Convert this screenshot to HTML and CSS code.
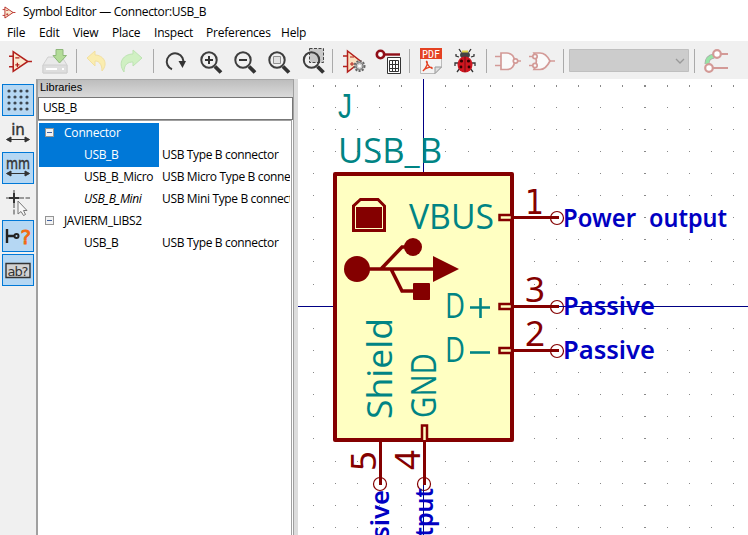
FILE: index.html
```html
<!DOCTYPE html>
<html lang="en">
<head>
<meta charset="utf-8">
<title>Symbol Editor — Connector:USB_B</title>
<link rel="stylesheet" href="styles.css">
</head>
<body>
<svg class="defs" width="0" height="0">
  <defs>
    <symbol id="amp" viewBox="0 0 24 24">
      <path d="M5 2.5V21.5L19 12ZM1 7H5M1 17H5M19 12H23" fill="#fae9d0" stroke="#b3201c" stroke-width="1.5"/>
      <path d="M7 8.5H11M7 15.2H11M9 13.2V17.2" fill="none" stroke="#b3201c" stroke-width="1.2"/>
    </symbol>
    <symbol id="lens" viewBox="0 0 24 24">
      <circle cx="10" cy="10" r="7.7" fill="none" stroke="#3e3e3e" stroke-width="2"/>
      <path d="M16 16.5L22 22.5" stroke="#333" stroke-width="3.8" fill="none"/>
    </symbol>
  </defs>
</svg>
<div class="app">
  <header class="title"><svg class="logo"><use href="#amp"/></svg><span>Symbol Editor — Connector:USB_B</span></header>
  <nav class="menu"><span class="m1">File</span><span class="m2">Edit</span><span class="m3">View</span><span class="m4">Place</span><span class="m5">Inspect</span><span class="m6">Preferences</span><span class="m7">Help</span></nav>
  <div class="toolbar">
    <svg width="748" height="38" viewBox="0 41 748 38">
      <use href="#amp" x="8" y="49" width="25" height="25"/>
      <g>
        <path d="M48 57H62L67 65V73H43V65Z" fill="#e9e9e9" stroke="#d0d0d0"/>
        <path d="M43 65H67V73H43Z" fill="#dedede" stroke="#cfcfcf"/>
        <path d="M46 69H57M62 69H64" stroke="#fff" stroke-width="2"/>
        <path d="M56 49.5H63V55.5H66.5L59.5 63L53 55.5H56Z" fill="#b3dc98" stroke="#8eb77a"/>
      </g>
      <path d="M76.5 49V73M153.5 49V73M332.5 49V73M409.5 49V73M486.5 49V73M563.5 49V73M694.5 49V73" stroke="#aaa"/>
      <path d="M87 58L95 51V55C103 55 109 63 102 71C102 63 98 61 95 61V66Z" fill="#faedb0" stroke="#f2dfa0"/>
      <path d="M142 58L133 50V54C124 54 117 62 124 72C124 64 128 62 133 62V66Z" fill="#d0f0c3" stroke="#bde3b3"/>
      <path d="M172 69.3A8.3 8.3 0 1 1 183 64" fill="none" stroke="#3b3b3b" stroke-width="2"/>
      <path d="M178.5 61L186 61L182.5 68Z" fill="#333"/>
      <use href="#lens" x="199" y="50" width="24" height="24"/><path d="M205 60H213M209 56V64" stroke="#333" stroke-width="2"/>
      <use href="#lens" x="233" y="50" width="24" height="24"/><path d="M239 60H247" stroke="#333" stroke-width="2"/>
      <use href="#lens" x="267" y="50" width="24" height="24"/><path d="M273.5 56.5H280.500V63.500H273.500Z" fill="#e2e2e2" stroke="#909090"/>
      <path d="M309.500 48.500H323.500V62.500H309.500Z" fill="#c8c8c8" stroke="#444" stroke-dasharray="3 1.500"/>
      <use href="#lens" x="301.500" y="50" width="24" height="24"/>
      <path d="M347.500 51V72L361 61.500ZM343 56H347M343 66.500H347" fill="#fae0bf" stroke="#b3201c" stroke-width="1.500"/><path d="M350 57H354M350 64H354M352 62V66" stroke="#b3201c"/>
      <circle cx="359.500" cy="66" r="5" fill="#c8c8c8" stroke="#666" stroke-width="2" stroke-dasharray="2 1.300"/><circle cx="359.500" cy="66" r="3.500" fill="#ccc" stroke="#777"/><circle cx="359.500" cy="66" r="1.500" fill="#fff"/>
      <path d="M385 54.500H400" stroke="#900e18" stroke-width="2.400"/><circle cx="380.500" cy="54.500" r="3.700" fill="#fff" stroke="#900e18" stroke-width="2.600"/>
      <path d="M387.500 57.500H400.500V73.500H387.500Z" fill="#fff" stroke="#333"/><path d="M389.500 60.500H398.500V71.500H389.500ZM389.500 64.500H398.500M389.500 68.500H398.500M392.500 60V72M395.500 60V72" fill="none" stroke="#333"/>
      <path d="M420.500 48.500H441.500V67L435 73.500H420.500Z" fill="#f3f3f3" stroke="#bbb"/>
      <path d="M420 48H442V59H420Z" fill="#e44122"/><text x="422" y="57.500" font-family="DejaVu Sans Mono" font-size="10" fill="#fff" textLength="18">PDF</text>
      <path d="M423 71C427 67 428 63 427 61.500C425.500 60 427 66 432 68.500C433 66.500 426 66.500 423 71Z" fill="none" stroke="#e44122" stroke-width="1.300"/><path d="M435 73.500V67H441.500Z" fill="#ddd" stroke="#999"/>
      <path d="M459 57L456 56V54M471 57L474 56V54M458 63H455V66M472 63H475V66M460 68L457 72M470 68L473 72M461 52L459 49M469 52L471 49" fill="none" stroke="#333" stroke-width="1.300"/>
      <ellipse cx="465" cy="55" rx="5" ry="4" fill="#444"/><path d="M462 51.500H468" stroke="#e1d44b" stroke-width="2"/>
      <ellipse cx="465" cy="64.500" rx="7.500" ry="8" fill="#cf1620"/><path d="M465 56.500V72" stroke="#701015"/><circle cx="461.500" cy="61" r="1.600" fill="#300"/><circle cx="468.500" cy="61" r="1.600" fill="#300"/><circle cx="461" cy="67" r="1.400" fill="#300"/><circle cx="469" cy="67" r="1.400" fill="#300"/>
      <g fill="#fafafa" stroke="#d39a97" stroke-width="1.700"><path d="M495 56.500H501M495 65.500H501M518 61H521"/><path d="M501 53H507C517 53 517 69.500 507 69.500H501Z"/><circle cx="515.500" cy="61" r="2.200"/>
      <path d="M529 56.500H535M529 65.500H535M549 61H555"/><path d="M534 53H540C545 53 548 57 550 61C548 65 545 69.500 540 69.500H534C537 64 537 58 534 53Z"/><circle cx="535" cy="56.500" r="2.200"/><circle cx="535" cy="65.500" r="2.200"/></g>
      <path d="M569.500 49.500H688.500V71.500H569.500Z" fill="#ccc" stroke="#bfbfbf"/><path d="M676 59L680 63L684 59" fill="none" stroke="#999" stroke-width="1.300"/>
      <path d="M707 64C707 59 709 57 714 56" fill="none" stroke="#aaa" stroke-width="5"/><path d="M707 64C707 59 709 57 714 56" fill="none" stroke="#98e5a6" stroke-width="3.500"/>
      <g fill="#fff" stroke="#d39a97" stroke-width="2.200"><path d="M720 54H728M713 68H728"/><circle cx="717" cy="54" r="3.800"/><circle cx="709" cy="68" r="3.800"/></g>
    </svg>
  </div>
  <main class="work">
    <aside class="tools">
      <svg class="tool on" viewBox="0 0 32 32"><path d="M7 7H26M7 13H26M7 19H26M7 25H26" fill="none" stroke="#3c4650" stroke-width="3.200" stroke-linecap="round" stroke-dasharray="0 6"/></svg>
      <svg class="tool" viewBox="0 0 32 32"><text class="unit" x="16" y="17" text-anchor="middle" font-size="15">in</text><path d="M5 21.500H27M9 19L4.500 21.500L9 24ZM23 19L27.500 21.500L23 24Z" fill="#333" stroke="#333" stroke-width="1"/></svg>
      <svg class="tool on" viewBox="0 0 32 32"><text class="unit" x="16" y="17" text-anchor="middle" font-size="15" textLength="24" lengthAdjust="spacingAndGlyphs">mm</text><path d="M5 21.500H27M9 19L4.500 21.500L9 24ZM23 19L27.500 21.500L23 24Z" fill="#333" stroke="#333" stroke-width="1"/></svg>
      <svg class="tool" viewBox="0 0 32 32"><path d="M4 12H28M12 4V30" stroke="#999" stroke-width="2" stroke-dasharray="5 1.500"/><path d="M7 12H17M12 7V17" stroke="#333" stroke-width="2"/><path d="M16 15V28L19 25.500L21.500 29.500L23.500 28.500L21.500 24.500H25Z" fill="#f7f7f7" stroke="#777"/></svg>
      <svg class="tool on" viewBox="0 0 32 32"><path d="M5 9V23M5 16H12" stroke="#222" stroke-width="2.400"/><circle cx="14.500" cy="16" r="2" fill="none" stroke="#222" stroke-width="2"/><text class="ask" x="18.500" y="24" font-size="20">?</text></svg>
      <svg class="tool on" viewBox="0 0 32 32"><path d="M4 9.500H28V23.500H4Z" fill="#d2d2d2" stroke="#333" stroke-width="1.400"/><text x="16" y="21.500" text-anchor="middle" font-size="13" textLength="21">ab?</text></svg>
    </aside>
    <section class="panel">
      <div class="caption">Libraries</div>
      <div class="search">USB_B</div>
      <div class="tree">
        <div class="row sel"><i class="box"></i><span class="lib">Connector</span></div>
        <div class="row sel"><span class="name">USB_B</span><span class="desc">USB Type B connector</span></div>
        <div class="row"><span class="name">USB_B_Micro</span><span class="desc">USB Micro Type B connector</span></div>
        <div class="row"><span class="name it">USB_B_Mini</span><span class="desc">USB Mini Type B connector</span></div>
        <div class="row"><i class="box"></i><span class="lib caps">JAVIERM_LIBS2</span></div>
        <div class="row"><span class="name">USB_B</span><span class="desc">USB Type B connector</span></div>
      </div>
    </section>
    <div class="sash"></div>
    <svg class="canvas" width="450" height="456" viewBox="298 79 450 456">
      <g id="grid" fill="#888" shape-rendering="crispEdges"></g>
      <path d="M423.500 79V535M298 306.500H748" stroke="#000084" shape-rendering="crispEdges"/>
      <rect x="335" y="174" width="177" height="266" fill="#ffffc2" stroke="#840000" stroke-width="4" stroke-linejoin="round"/>
      <g fill="none" stroke="#840000" stroke-width="3">
        <path d="M512 217.500H559M512 306.500H559M512 350.500H559M380.500 440V485M424.500 440V485"/>
        <path d="M499.500 215H512V220H499.500ZM499.500 304H512V309H499.500ZM499.500 348H512V353H499.500ZM422 440V425.500H427V440" stroke-width="2.500" fill="#ffffc2"/>
        <g stroke-width="1.200"><circle cx="557" cy="218" r="6.500"/><circle cx="557" cy="307" r="6.500"/><circle cx="557" cy="351" r="6.500"/><circle cx="380" cy="484" r="6.500"/><circle cx="424" cy="484" r="6.500"/></g>
        <path d="M353.500 230.500V206L360.500 199.500H378L384.500 206V230.500Z"/>
        <path d="M358 269H434M381 269L402 247H413M391 269L402 291H414" stroke-width="3.500"/>
      </g>
      <g fill="#840000"><path d="M356 207H382V228H356ZM433 256V282L459 269Z"/><circle cx="357" cy="269" r="13"/><circle cx="413" cy="247" r="9"/><rect x="413" y="283" width="17" height="17" rx="1"/></g>
      <g class="field">
        <text class="jay" x="338" y="118" textLength="14" lengthAdjust="spacingAndGlyphs">J</text>
        <text x="338" y="163" textLength="104" lengthAdjust="spacingAndGlyphs">USB_B</text>
        <text x="409" y="229" textLength="85" lengthAdjust="spacingAndGlyphs">VBUS</text>
        <text x="445" y="318" textLength="20" lengthAdjust="spacingAndGlyphs">D</text><path d="M470 307.500H490M480.500 298V318" stroke="#008484" stroke-width="2.600"/>
        <text x="445" y="362" textLength="20" lengthAdjust="spacingAndGlyphs">D</text><path d="M470 352.500H490" stroke="#008484" stroke-width="2.600"/>
        <text transform="translate(392 419) rotate(-90)" textLength="101" lengthAdjust="spacingAndGlyphs">Shield</text>
        <text transform="translate(436 418) rotate(-90)" textLength="65" lengthAdjust="spacingAndGlyphs">GND</text>
      </g>
      <g class="num">
        <text class="one" x="525" y="214" textLength="19" lengthAdjust="spacingAndGlyphs">1</text><text x="525" y="302">3</text><text x="525" y="346">2</text>
        <text transform="translate(376 471) rotate(-90)">5</text><text transform="translate(420 470) rotate(-90)">4</text>
      </g>
      <path d="M423.500 490V535M563 306.500H748" stroke="#000084" shape-rendering="crispEdges"/>
      <g class="type">
        <text x="563" y="227" textLength="73" lengthAdjust="spacingAndGlyphs">Power</text>
        <text x="649" y="227" textLength="78" lengthAdjust="spacingAndGlyphs">output</text>
        <text x="563" y="315" textLength="92" lengthAdjust="spacingAndGlyphs">Passive</text>
        <text x="563" y="359" textLength="92" lengthAdjust="spacingAndGlyphs">Passive</text>
        <text transform="translate(389 582) rotate(-90)" textLength="92" lengthAdjust="spacingAndGlyphs">Passive</text>
        <text transform="translate(433 566) rotate(-90)" textLength="78" lengthAdjust="spacingAndGlyphs">output</text>
      </g>
    </svg>
  </main>
</div>
<script src="grid.js"></script>
</body>
</html>
```
FILE: styles.css
```css
* { box-sizing: border-box; }
body { margin: 0; overflow: hidden; background: #fff; color: #000; font: 12px/16px "Open Sans", "Noto Sans", sans-serif; }
svg { display: block; flex: none; }
.defs { position: absolute; }
.app { width: 748px; height: 535px; display: flex; flex-direction: column; overflow: hidden; }
.title { height: 24px; display: flex; align-items: center; gap: 7px; padding-left: 2px; letter-spacing: -.34px; }
.logo { width: 14px; height: 15px; }
.menu { height: 17px; display: grid; grid-template-columns: 32px 34px 39px 42px 52px 75px 40px; padding-left: 7px; line-height: 17px; letter-spacing: -.2px; white-space: nowrap; }
.toolbar { height: 38px; background: #f0f0f0; }
.work { display: flex; height: 456px; }
.tools { width: 36px; background: #f0f0f0; padding: 5px 2px; display: flex; flex-direction: column; gap: 2px; }
.tool { width: 32px; height: 32px; font-family: "DejaVu Sans", sans-serif; fill: #333; }
.tool.on { background: #b5d7f3; outline: 1px solid #0078d7; outline-offset: -1px; }
.unit { stroke: #333; stroke-width: .4; }
.tool .ask { fill: #f26a10; stroke: #f26a10; stroke-width: .9; }
.panel { width: 258px; border-left: 2px solid #a0a0a0; border-right: 1px solid #a0a0a0; border-top: 1px solid #aaa; background: #fff; }
.caption { height: 17px; background: linear-gradient(#bdbdbd, #dadada); font: 11px/15px "Liberation Sans", sans-serif; padding-left: 2px; }
.search { height: 23px; border: 1px solid #777; padding: 2px 4px; letter-spacing: -.45px; }
.tree { height: 415px; padding-top: 2px; border-top: 1px solid #a0a0a0; border-right: 1px solid #a0a0a0; margin-right: 1px; overflow: hidden; }
.row { height: 22px; line-height: 20px; display: grid; grid-template-columns: 25px 20px 78px 128px; margin-left: 1px; white-space: nowrap; letter-spacing: -.35px; }
.sel { background: linear-gradient(#0078d7, #0078d7) 0 0 / 120px 22px no-repeat; }
.sel .lib, .sel .name { color: #fff; }
.box { grid-column: 1; width: 9px; height: 9px; margin: 5px 0 0 6px; border: 1px solid #959595; background: linear-gradient(#4062a0, #4062a0) center / 5px 1px no-repeat, #f3f3f3; }
.lib { grid-column: 2 / 4; letter-spacing: -.2px; }
.caps { letter-spacing: -.35px; }
.name { grid-column: 3; }
.desc { grid-column: 4; overflow: hidden; }
.it { font-style: italic; }
.sash { width: 4px; background: #dcdcdc; }
.field { font: 35px "Open Sans", "Noto Sans", sans-serif; fill: #008484; }
.jay { font-family: "Liberation Sans", sans-serif; }
.num { font: 35px "Noto Sans", sans-serif; fill: #840000; }
.one { font: 33px "DejaVu Sans", sans-serif; }
.type { font: 600 26px "Noto Sans", sans-serif; fill: #0000c2; }
```
FILE: grid.js
```js
const grid = document.getElementById('grid');
for (let row = 0; row < 21; row++) {
  for (let col = 0; col < 20; col++) {
    const dot = document.createElementNS('http://www.w3.org/2000/svg', 'rect');
    dot.setAttribute('x', Math.floor(313.3 + col * 22.11));
    dot.setAttribute('y', Math.floor(85 + row * 22.12));
    dot.setAttribute('width', col === 15 ? 2 : 1);
    dot.setAttribute('height', row === 0 ? 2 : 1);
    grid.append(dot);
  }
}
```
